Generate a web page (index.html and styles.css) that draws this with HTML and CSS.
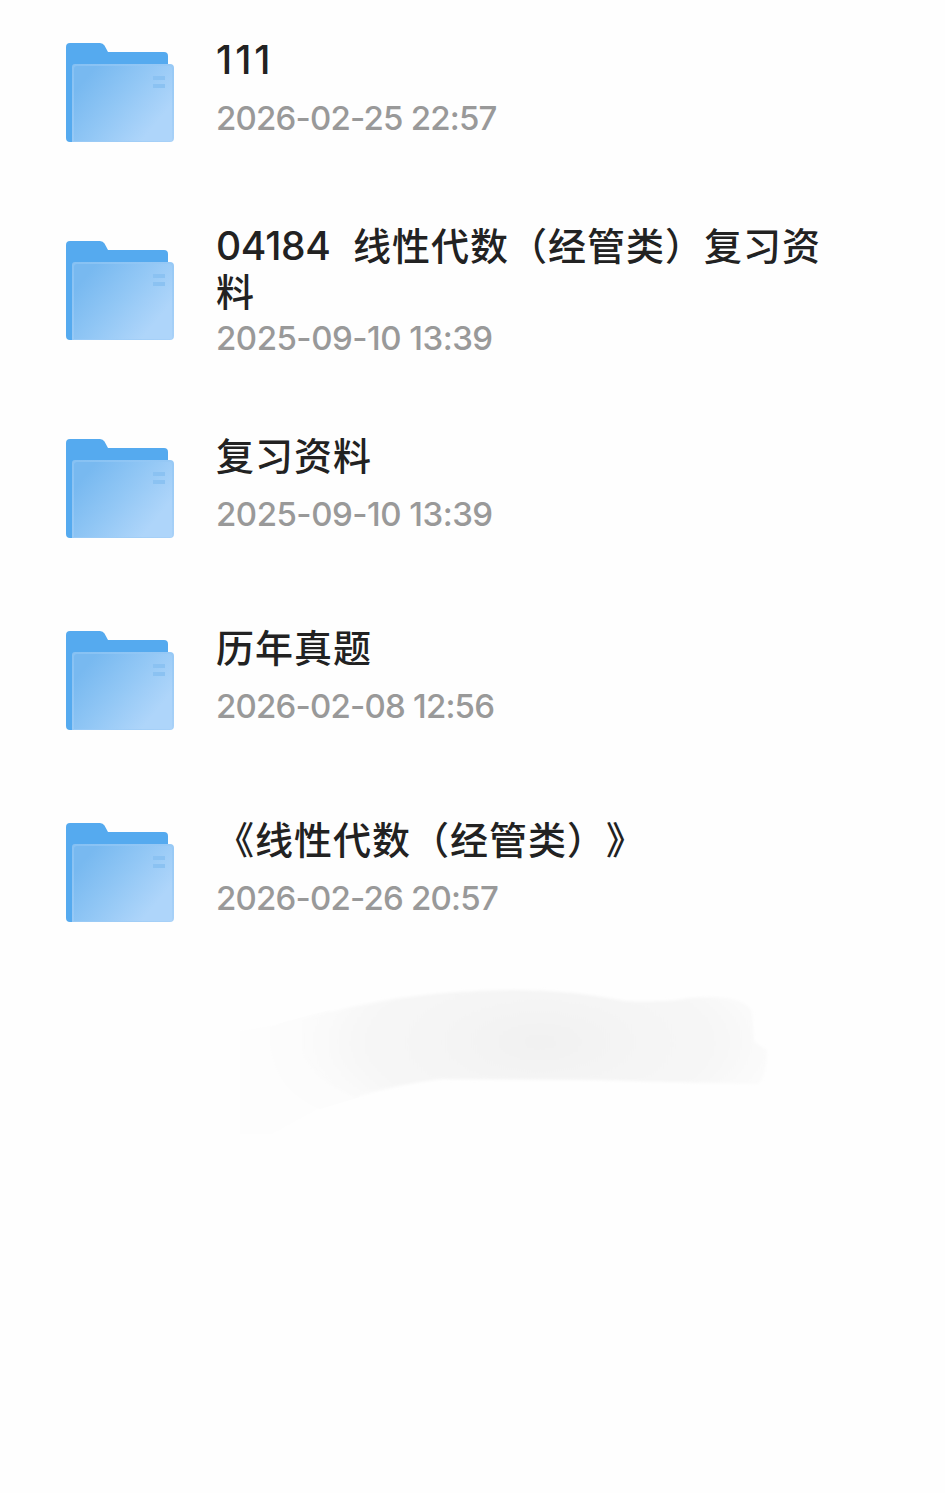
FILE: index.html
```
<!DOCTYPE html>
<html lang="zh-CN">
<head>
    <meta charset="UTF-8">
    <meta name="viewport" content="width=device-width, initial-scale=1.0">
    <title>文件列表</title>
    <link rel="stylesheet" href="styles.css">
</head>
<body>
    <!-- 文件夹图标 -->
    <svg class="defs" width="0" height="0">
        <defs>
            <linearGradient id="front" gradientUnits="userSpaceOnUse" x1="20" y1="35" x2="84" y2="88">
                <stop offset="0" stop-color="#78b9f0"/>
                <stop offset="0.5" stop-color="#92c7f5"/>
                <stop offset="1" stop-color="#aed5fa"/>
            </linearGradient>
            <linearGradient id="edge" x1="0" y1="0" x2="1" y2="1">
                <stop offset="0" stop-color="#86c1f3"/>
                <stop offset="1" stop-color="#a8d1f8"/>
            </linearGradient>
            <symbol id="folder" viewBox="0 0 108 99">
                <path d="M4 0H34Q37 0 38.500 2.500L42 9H98Q102 9 102 13V60L10 99H4Q0 99 0 95V4Q0 0 4 0Z" fill="#55aaef"/>
                <path d="M9 21H104Q108 21 108 25V95Q108 99 104 99H6V24Q6 21 9 21Z" fill="url(#edge)"/>
                <path d="M11 23H102.500Q106 23 106 26V98H8V26Q8 23 11 23Z" fill="url(#front)"/>
                <path d="M87 33H99V37H87ZM87 41H99V45H87Z" fill="#8bc2f2"/>
            </symbol>
        </defs>
    </svg>

    <div class="file-list">
        <div class="file-item">
            <svg class="icon"><use href="#folder"/></svg>
            <div class="info">
                <div class="name"><span class="num ones">111</span></div>
                <div class="time">2026-02-25 22:57</div>
            </div>
        </div>
        <div class="file-item two-line">
            <svg class="icon"><use href="#folder"/></svg>
            <div class="info">
                <div class="name"><span class="num code">04184</span>线性代数（经管类）复习资<br>料</div>
                <div class="time narrow">2025-09-10 13:39</div>
            </div>
        </div>
        <div class="file-item">
            <svg class="icon"><use href="#folder"/></svg>
            <div class="info">
                <div class="name">复习资料</div>
                <div class="time narrow">2025-09-10 13:39</div>
            </div>
        </div>
        <div class="file-item">
            <svg class="icon"><use href="#folder"/></svg>
            <div class="info">
                <div class="name">历年真题</div>
                <div class="time">2026-02-08 12:56</div>
            </div>
        </div>
        <div class="file-item">
            <svg class="icon"><use href="#folder"/></svg>
            <div class="info">
                <div class="name">《线性代数（经管类）》</div>
                <div class="time">2026-02-26 20:57</div>
            </div>
        </div>
    </div>

    <!-- 底部灰色涂抹 -->
    <svg class="smear" viewBox="220 970 570 180">
        <defs>
            <radialGradient id="shade" gradientUnits="userSpaceOnUse" cx="0" cy="0" r="1" gradientTransform="translate(540 1042) scale(255 110)">
                <stop offset="0" stop-color="#f1f1f1"/>
                <stop offset="0.2" stop-color="#f3f3f3"/>
                <stop offset="0.65" stop-color="#f6f6f6"/>
                <stop offset="0.88" stop-color="#fafafa"/>
                <stop offset="1" stop-color="#fcfcfc"/>
            </radialGradient>
            <filter id="soft" x="-10%" y="-10%" width="120%" height="120%">
                <feGaussianBlur stdDeviation="1.5"/>
            </filter>
        </defs>
        <path d="M240 1031Q275 1026 290 1020L325 1105L272 1134H240Z" fill="#fdfdfd"/>
        <path d="M270 1027Q300 1017 330 1010L360 1097L320 1109Q276 1090 270 1045Z" fill="#fcfcfc"/>
        <path d="M302 1020Q400 990 515 990Q570 990 625 1001Q665 1003 690 998Q745 994 752 1012L754 1042L767 1050Q767 1074 758 1084Q670 1082 600 1080Q500 1079 440 1079Q400 1084 355 1097Q315 1083 302 1050Z" fill="url(#shade)" filter="url(#soft)"/>
    </svg>
</body>
</html>
```
FILE: styles.css
```
body {
    font-family: Inter, 'Noto Sans CJK SC', sans-serif;
    background-color: #fefefe;
    margin: 0;
    overflow-x: hidden;
}

.defs {
    display: block;
    height: 0;
}

.file-list {
    padding-top: 2px;
}

.file-item {
    display: flex;
    align-items: center;
    gap: 42px;
    height: 192px;
    padding: 0 98px 0 66px;
    box-sizing: border-box;
    margin-top: -6px;
    margin-bottom: 6px;
}

.file-item.two-line {
    height: 204px;
}

.icon {
    width: 108px;
    height: 99px;
    flex-shrink: 0;
}

.info {
    flex: 1;
    padding-bottom: 9px;
}

.name {
    color: #222;
    font-family: 'Noto Sans CJK SC', sans-serif;
    font-size: 38px;
    font-weight: 500;
    letter-spacing: 1px;
    line-height: 46px;
    margin-bottom: 14px;
    white-space: nowrap;
    text-spacing-trim: space-all;
}

.num {
    font-family: Inter, sans-serif;
    font-size: 39px;
    line-height: 1;
    letter-spacing: -0.3px;
}

.ones {
    letter-spacing: 3px;
}

.code {
    display: inline-block;
    width: 137px;
}

.time {
    color: #999;
    font-size: 33px;
    font-weight: 450;
    letter-spacing: -0.8px;
    line-height: 46px;
    white-space: nowrap;
}

.narrow {
    letter-spacing: -0.5px;
}

.two-line .info {
    padding: 1px 0 0;
}

.two-line .name {
    margin-bottom: 2px;
}

.smear {
    display: block;
    width: 570px;
    height: 180px;
    margin: -4px 0 0 220px;
}
```
